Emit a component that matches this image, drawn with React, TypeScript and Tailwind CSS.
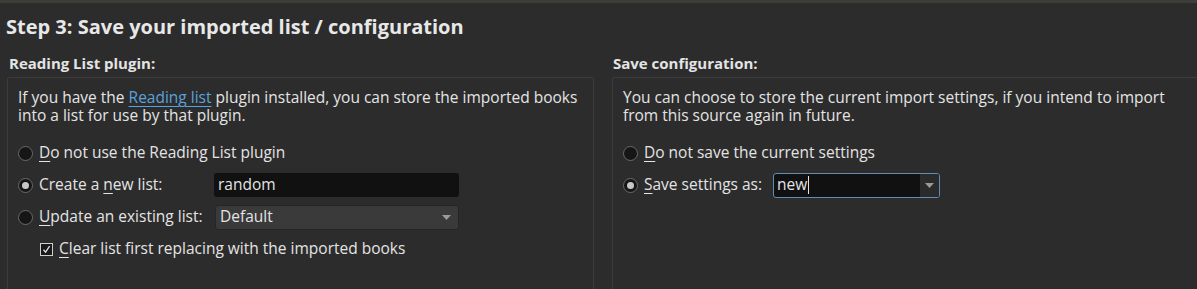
import React from "react";

const font = { fontFamily: "'Open Sans', 'Liberation Sans', sans-serif" };

function Radio({ checked }: { checked?: boolean }) {
  return (
    <span className="flex h-[15px] w-[15px] shrink-0 items-center justify-center rounded-full border border-[#6b6b6b] bg-[#161616]">
      {checked && <span className="h-[7px] w-[7px] rounded-full bg-[#c8c8c8]" />}
    </span>
  );
}

function Arrow() {
  return (
    <svg width="9" height="5" viewBox="0 0 9 5">
      <path d="M0 0 L9 0 L4.5 5 Z" fill="#9a9a9a" />
    </svg>
  );
}

function Mn({ k, rest, pre = "" }: { k: string; rest: string; pre?: string }) {
  return (
    <span>
      {pre}
      <span className="underline decoration-1 underline-offset-[3px]">{k}</span>
      {rest}
    </span>
  );
}

export default function App() {
  return (
    <div
      className="h-[289px] w-[1197px] overflow-hidden bg-[#2c2c2c] text-[15.5px] text-[#e4e4e4]"
      style={font}
    >
      <div className="h-[3px] bg-[#3e3d39]" />
      <div className="pl-[6px] pt-[12px] text-[20px] font-bold leading-[24px] text-[#e8e8e8]">
        Step 3: Save your imported list / configuration
      </div>
      <div className="mt-[15px] flex gap-[18px] pl-[7px]">
        <div className="flex w-[587px] flex-col">
          <div className="pl-[2px] text-[15px] font-bold leading-[18px]">Reading List plugin:</div>
          <div className="mt-[5px] h-[220px] rounded-tl-[2px] rounded-tr-[2px] border border-b-0 border-[#3c3c3c] pl-[10px] pt-[10px]">
            <p className="leading-[18px]">
              If you have the{" "}
              <span className="text-[#5aa2dc] underline decoration-1 underline-offset-[3px]">Reading list</span>{" "}
              plugin installed, you can store the imported books
              <br />
              into a list for use by that plugin.
            </p>
            <div className="mt-[17px] flex flex-col gap-[8px]">
              <div className="flex h-[24px] items-center gap-[6px]">
                <Radio />
                <Mn k="D" rest="o not use the Reading List plugin" />
              </div>
              <div className="flex h-[24px] items-center">
                <div className="flex w-[196px] items-center gap-[6px]">
                  <Radio checked />
                  <Mn pre="Create a " k="n" rest="ew list:" />
                </div>
                <div className="flex h-[24px] w-[245px] items-center rounded-[3px] bg-[#111111] px-[4px]">random</div>
              </div>
              <div className="flex h-[24px] items-center">
                <div className="flex w-[197px] items-center gap-[6px]">
                  <Radio />
                  <Mn k="U" rest="pdate an existing list:" />
                </div>
                <div className="flex h-[25px] w-[244px] items-center justify-between rounded-[3px] border border-[#252525] bg-[#3a3a3a] pl-[4px] pr-[7px]">
                  <span>Default</span>
                  <Arrow />
                </div>
              </div>
              <div className="flex h-[24px] items-center gap-[6px] pl-[22px]">
                <span className="flex h-[13px] w-[13px] items-center justify-center border border-[#cfcfcf] bg-[#1a1a1a]">
                  <svg width="9" height="9" viewBox="0 0 9 9">
                    <path d="M1.5 4.8 L3.6 7.2 L7.6 1.2" stroke="#e0e0e0" strokeWidth="1.3" fill="none" />
                  </svg>
                </span>
                <Mn k="C" rest="lear list first replacing with the imported books" />
              </div>
            </div>
          </div>
        </div>
        <div className="flex flex-1 flex-col">
          <div className="pl-[1px] text-[15px] font-bold leading-[18px]">Save configuration:</div>
          <div className="mt-[5px] h-[220px] rounded-tl-[2px] border border-b-0 border-r-0 border-[#3c3c3c] pl-[10px] pt-[10px]">
            <p className="leading-[18px]">
              You can choose to store the current import settings, if you intend to import
              <br />
              from this source again in future.
            </p>
            <div className="mt-[17px] flex flex-col gap-[8px]">
              <div className="flex h-[24px] items-center gap-[6px]">
                <Radio />
                <Mn k="D" rest="o not save the current settings" />
              </div>
              <div className="flex h-[24px] items-center">
                <div className="flex w-[150px] items-center gap-[6px]">
                  <Radio checked />
                  <Mn k="S" rest="ave settings as:" />
                </div>
                <div className="flex h-[25px] w-[167px] items-stretch rounded-[3px] border border-[#5f8db3] bg-[#111111]">
                  <div className="flex flex-1 items-center pl-[3px]">
                    new<span className="ml-[1px] inline-block h-[18px] w-[1px] bg-[#e4e4e4]" />
                  </div>
                  <div className="flex w-[19px] items-center justify-center rounded-r-[2px] bg-[#2b2b2b]">
                    <Arrow />
                  </div>
                </div>
              </div>
            </div>
          </div>
        </div>
      </div>
    </div>
  );
}
